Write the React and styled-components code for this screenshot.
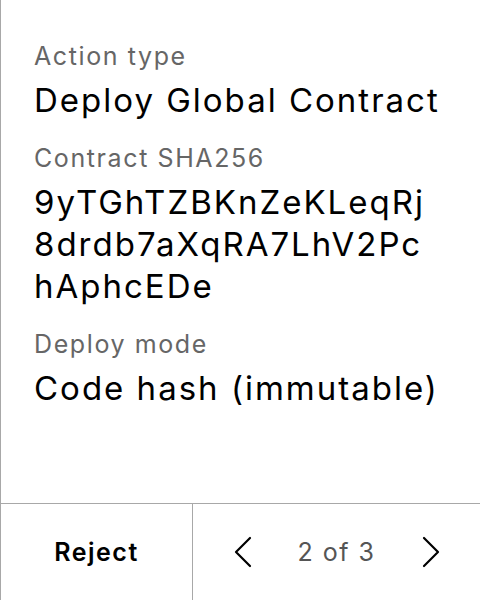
import React from "react"
import styled, { createGlobalStyle } from "styled-components"

const Global = createGlobalStyle`
  html, body { margin: 0; padding: 0; background: #fff; }
  body { font-family: Inter, "Noto Sans", sans-serif; }
`

const Screen = styled.div`
  width: 480px;
  height: 600px;
  box-sizing: border-box;
  border-left: 1px solid #a8a8a8;
  display: flex;
  flex-direction: column;
`

const Body = styled.div`
  flex: 1;
  padding: 40px 33px 0;
  display: flex;
  flex-direction: column;
  gap: 21px;
`

const Field = styled.div`
  display: flex;
  flex-direction: column;
  gap: 7px;
`

const Label = styled.div`
  font-size: 25px;
  line-height: 32px;
  letter-spacing: 1.6px;
  color: #666;
`

const Value = styled.div`
  font-size: 33px;
  line-height: 42px;
  letter-spacing: 2px;
  color: #000;
  word-break: break-all;
  width: ${p => (p.narrow ? "404px" : "auto")};
`

const Footer = styled.div`
  height: 96px;
  border-top: 1px solid #a8a8a8;
  display: flex;
`

const RejectButton = styled.button`
  width: 192px;
  border: 0;
  border-right: 1px solid #a8a8a8;
  background: none;
  font-family: inherit;
  font-size: 25px;
  font-weight: 600;
  letter-spacing: 1.5px;
  color: #000;
  padding: 0;
`

const Pager = styled.div`
  flex: 1;
  display: flex;
  align-items: center;
  justify-content: center;
  gap: 46px;
`

const PageText = styled.span`
  font-size: 25px;
  letter-spacing: 1.5px;
  color: #555;
`

const Chevron = ({ dir }) => (
  <svg width="18" height="32" viewBox="0 0 18 32" fill="none">
    <path
      d={dir === "left" ? "M16 2 L2 16 L16 30" : "M2 2 L16 16 L2 30"}
      stroke="#000"
      strokeWidth="2.2"
      strokeLinecap="round"
      strokeLinejoin="round"
    />
  </svg>
)

export default function App() {
  return (
    <>
      <Global />
      <Screen>
        <Body>
          <Field>
            <Label>Action type</Label>
            <Value>Deploy Global Contract</Value>
          </Field>
          <Field>
            <Label>Contract SHA256</Label>
            <Value narrow>9yTGhTZBKnZeKLeqRj8drdb7aXqRA7LhV2PchAphcEDe</Value>
          </Field>
          <Field>
            <Label>Deploy mode</Label>
            <Value>Code hash (immutable)</Value>
          </Field>
        </Body>
        <Footer>
          <RejectButton>Reject</RejectButton>
          <Pager>
            <Chevron dir="left" />
            <PageText>2 of 3</PageText>
            <Chevron dir="right" />
          </Pager>
        </Footer>
      </Screen>
    </>
  )
}
